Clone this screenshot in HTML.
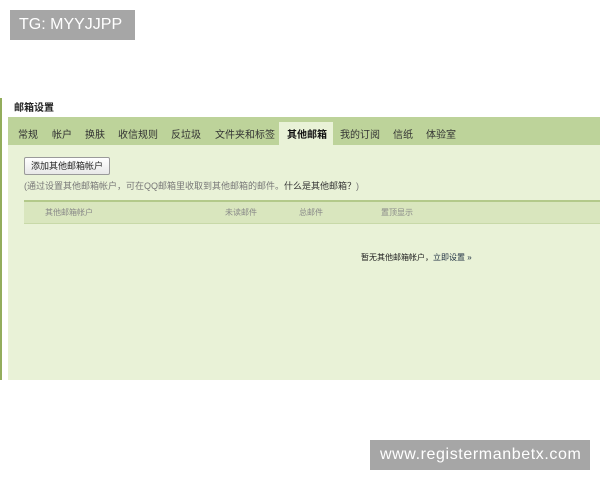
<!DOCTYPE html>
<html><head><meta charset="utf-8"><style>
body{margin:0;width:600px;height:480px;background:#fff;position:relative;overflow:hidden;font-family:"Liberation Sans","Noto Sans CJK SC",sans-serif;}
.a{position:absolute;white-space:nowrap}
.tab{position:absolute;top:126px;font-size:10px;color:#333}
</style></head><body>
<div class="a" style="left:10px;top:10px;width:125px;height:30px;background:#a6a6a6;color:#fff;font-size:16px;line-height:30px;text-indent:9px">TG: MYYJJPP</div>
<div class="a" style="left:0;top:98px;width:2px;height:282px;background:#93ad5c"></div>
<div class="a" style="left:14px;top:99px;font-size:10px;color:#222;font-weight:bold">邮箱设置</div>
<div class="a" style="left:8px;top:117px;width:592px;height:263px;background:#e9f2d7"></div>
<div class="a" style="left:8px;top:117px;width:592px;height:28px;background:#bdd39a"></div>
<div class="a" style="left:279px;top:122px;width:54px;height:23px;background:#e9f2d7"></div>
<div class="tab" style="left:18px">常规</div>
<div class="tab" style="left:52px">帐户</div>
<div class="tab" style="left:85px">换肤</div>
<div class="tab" style="left:118px">收信规则</div>
<div class="tab" style="left:171px">反垃圾</div>
<div class="tab" style="left:215px">文件夹和标签</div>
<div class="tab" style="left:287px;font-weight:bold;color:#111">其他邮箱</div>
<div class="tab" style="left:340px">我的订阅</div>
<div class="tab" style="left:393px">信纸</div>
<div class="tab" style="left:426px">体验室</div>
<div class="a" style="left:24px;top:157px;width:84px;height:16px;border:1px solid #9a9a9a;border-radius:2px;background:linear-gradient(#fff,#e8e8e8);font-size:9px;line-height:16px;text-align:center;color:#222">添加其他邮箱帐户</div>
<div class="a" style="left:24px;top:179px;font-size:9px;color:#777">(通过设置其他邮箱帐户，可在QQ邮箱里收取到其他邮箱的邮件。<span style="color:#333">什么是其他邮箱？</span>)</div>
<div class="a" style="left:24px;top:200px;width:576px;height:21px;background:#d9e6be;border-top:2px solid #b3c98a;border-bottom:1px solid #c8d9a8"></div>
<div class="a" style="left:45px;top:207px;font-size:8px;color:#888">其他邮箱帐户</div>
<div class="a" style="left:225px;top:207px;font-size:8px;color:#888">未读邮件</div>
<div class="a" style="left:299px;top:207px;font-size:8px;color:#888">总邮件</div>
<div class="a" style="left:381px;top:207px;font-size:8px;color:#888">置顶显示</div>
<div class="a" style="left:361px;top:252px;font-size:8px;color:#222">暂无其他邮箱帐户，<span style="color:#234">立即设置 »</span></div>
<div class="a" style="left:370px;top:440px;width:220px;height:30px;background:#a6a6a6;color:#fff;font-size:16px;line-height:30px;text-indent:10px;letter-spacing:0.6px">www.registermanbetx.com</div>
</body></html>
